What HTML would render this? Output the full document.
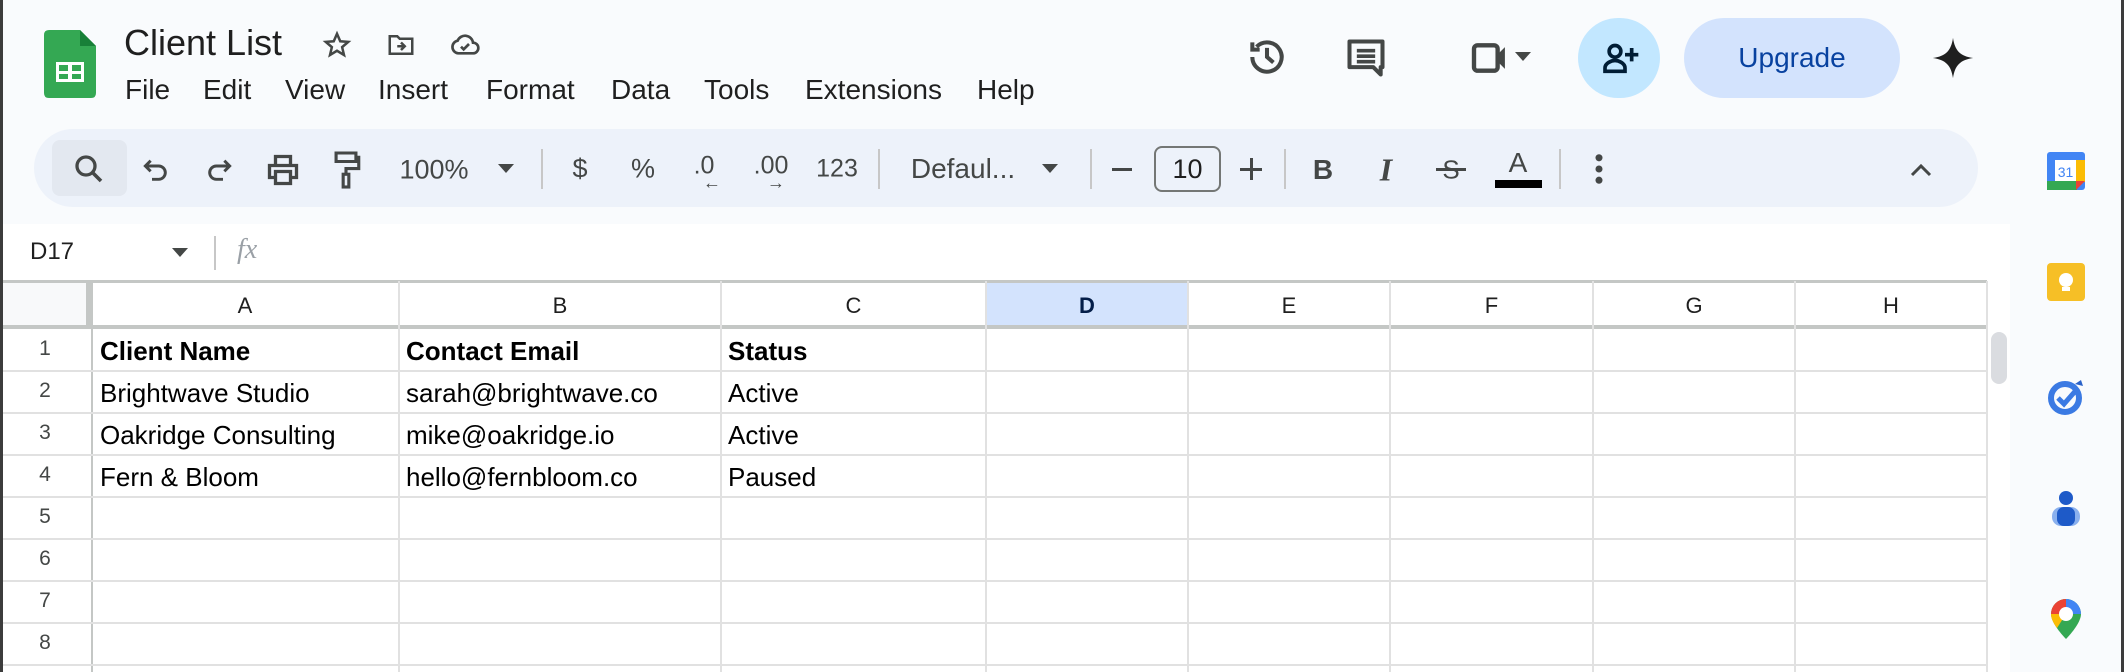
<!DOCTYPE html>
<html><head><meta charset="utf-8"><style>
*{box-sizing:border-box;margin:0;padding:0}
body{width:2124px;height:672px;overflow:hidden;background:#f9fbfd;font-family:"Liberation Sans",sans-serif;color:#1f1f1f;position:relative}
.a{position:absolute}
.menu span{position:absolute;top:74px;font-size:28px;color:#1f1f1f}
.tb{position:absolute;left:34px;top:129px;width:1944px;height:78px;background:#edf2fa;border-radius:39px}
.ic{position:absolute;transform:translate(-50%,-50%)}
.sep{position:absolute;top:149px;width:2px;height:40px;background:#c7c7c7}
.tt{position:absolute;font-size:27px;color:#444746;transform:translate(-50%,-50%)}
.grid{position:absolute;left:0;top:224px;width:2010px;height:448px;background:#fff}
.vl{position:absolute;top:281px;width:2px;height:391px;background:#e1e1e1}
.hl{position:absolute;left:0;width:1987px;height:2px;background:#e1e1e1}
.ch{position:absolute;top:283px;height:46px;line-height:46px;text-align:center;font-size:22px;color:#1f1f1f}
.rn{position:absolute;left:0;width:90px;text-align:center;font-size:21px;color:#444746}
.c{position:absolute;font-size:26px;color:#000}
</style></head><body>
<!-- logo -->
<svg class="a" style="left:44px;top:30px" width="52" height="68" viewBox="0 0 52 68"><path d="M5 0H36L52 16V63Q52 68 47 68H5Q0 68 0 63V5Q0 0 5 0Z" fill="#34a853"/><path d="M36 0V16H52Z" fill="#188038"/><rect x="12" y="32" width="28" height="20" fill="#fff"/><rect x="15" y="35" width="9" height="6" fill="#34a853"/><rect x="28" y="35" width="9" height="6" fill="#34a853"/><rect x="15" y="44" width="9" height="5" fill="#34a853"/><rect x="28" y="44" width="9" height="5" fill="#34a853"/></svg>
<div class="a" style="left:124px;top:22px;font-size:36px;color:#1f1f1f">Client List</div>
<svg class="a" style="left:322px;top:30px" width="30" height="30" viewBox="0 0 24 24"><path d="M12 3l2.6 6 6.4.5-4.9 4.2 1.5 6.3L12 16.6 6.4 20l1.5-6.3L3 9.5 9.4 9z" fill="none" stroke="#444746" stroke-width="2"/></svg>
<svg class="a" style="left:385px;top:30px" width="32" height="30" viewBox="0 0 24 24"><path d="M3 5h6l2 2h10v12H3z" fill="none" stroke="#444746" stroke-width="2"/><path d="M9 13h6M12 10l3 3-3 3" fill="none" stroke="#444746" stroke-width="2"/></svg>
<svg class="a" style="left:448px;top:28px" width="34" height="32" viewBox="0 0 24 24"><path d="M7 19h11a4 4 0 0 0 0-8 6 6 0 0 0-11.5-1.5A4.8 4.8 0 0 0 7 19z" fill="none" stroke="#444746" stroke-width="2"/><path d="M9 14l2 2 4-4" fill="none" stroke="#444746" stroke-width="2"/></svg>
<div class="menu"><span style="left:125px">File</span><span style="left:203px">Edit</span><span style="left:285px">View</span><span style="left:378px">Insert</span><span style="left:486px">Format</span><span style="left:611px">Data</span><span style="left:704px">Tools</span><span style="left:805px">Extensions</span><span style="left:977px">Help</span></div>
<!-- right header -->
<svg class="ic" style="left:1267px;top:57px" width="44" height="44" viewBox="0 0 24 24"><path d="M4 12a8 8 0 1 0 2.3-5.6M4 4v4h4M12 7v5l3.5 3" fill="none" stroke="#444746" stroke-width="2.2"/></svg>
<svg class="ic" style="left:1366px;top:58px" width="44" height="44" viewBox="0 0 24 24"><path d="M3 3h18v14h-1v4l-4-4H3z" fill="none" stroke="#444746" stroke-width="2.2" stroke-linejoin="round"/><path d="M7 8h10M7 11h10M7 14h10" stroke="#444746" stroke-width="2"/></svg>
<svg class="ic" style="left:1494px;top:58px" width="48" height="40" viewBox="0 0 26 22"><rect x="2" y="4" width="13" height="14" rx="2" fill="none" stroke="#444746" stroke-width="2.4"/><path d="M15 9l4-4v12l-4-4z" fill="#444746"/></svg>
<div class="a" style="left:1515px;top:52px;border-left:8px solid transparent;border-right:8px solid transparent;border-top:9px solid #444746"></div>
<div class="a" style="left:1578px;top:18px;width:82px;height:80px;border-radius:41px;background:#c2e7ff"></div>
<svg class="ic" style="left:1620px;top:58px" width="40" height="40" viewBox="0 0 24 24"><circle cx="9" cy="8" r="3.5" fill="none" stroke="#001d35" stroke-width="2.2"/><path d="M3 20v-2c0-3 4-4.5 6-4.5s6 1.5 6 4.5v2z" fill="none" stroke="#001d35" stroke-width="2.2"/><path d="M19 6v8M15 10h8" stroke="#001d35" stroke-width="2.2"/></svg>
<div class="a" style="left:1684px;top:18px;width:216px;height:80px;border-radius:40px;background:#d3e3fd;color:#0842a0;font-size:28px;text-align:center;line-height:80px">Upgrade</div>
<svg class="ic" style="left:1953px;top:58px" width="44" height="44" viewBox="0 0 24 24"><path d="M12 1C13 8 16 11 23 12 16 13 13 16 12 23 11 16 8 13 1 12 8 11 11 8 12 1z" fill="#1f1f1f"/></svg>
<!-- toolbar -->
<div class="tb"></div>
<div class="a" style="left:52px;top:140px;width:75px;height:56px;border-radius:8px;background:#e3e8f0"></div>
<svg class="ic" style="left:89px;top:169px" width="36" height="36" viewBox="0 0 24 24"><circle cx="10" cy="10" r="6" fill="none" stroke="#444746" stroke-width="2.2"/><path d="M14.5 14.5L20 20" stroke="#444746" stroke-width="2.4"/></svg>
<svg class="ic" style="left:156px;top:170px" width="32" height="32" viewBox="0 0 24 24"><path d="M8 5L4 9l4 4M4 9h10a5 5 0 0 1 0 10h-5" fill="none" stroke="#444746" stroke-width="2.2"/></svg>
<svg class="ic" style="left:219px;top:170px" width="32" height="32" viewBox="0 0 24 24"><path d="M16 5l4 4-4 4M20 9H10a5 5 0 0 0 0 10h5" fill="none" stroke="#444746" stroke-width="2.2"/></svg>
<svg class="ic" style="left:283px;top:170px" width="36" height="36" viewBox="0 0 24 24"><path d="M7 8V3h10v5M7 17H3V9h18v8h-4M7 13h10v8H7z" fill="none" stroke="#444746" stroke-width="2.2"/></svg>
<svg class="ic" style="left:346px;top:170px" width="34" height="40" viewBox="0 0 24 28"><path d="M5 2h14v6H5zM19 5h2v8h-9v4" fill="none" stroke="#444746" stroke-width="2.2"/><rect x="10" y="17" width="4" height="9" fill="none" stroke="#444746" stroke-width="2.2"/></svg>
<div class="tt" style="left:434px;top:170px">100%</div>
<div class="a" style="left:498px;top:164px;border-left:8px solid transparent;border-right:8px solid transparent;border-top:9px solid #444746"></div>
<div class="sep" style="left:541px"></div>
<div class="tt" style="left:580px;top:169px">$</div>
<div class="tt" style="left:643px;top:169px">%</div>
<div class="tt" style="left:704px;top:166px;font-size:25px">.0</div>
<div class="tt" style="left:712px;top:183px;font-size:18px">←</div>
<div class="tt" style="left:771px;top:166px;font-size:25px">.00</div>
<div class="tt" style="left:776px;top:183px;font-size:18px">→</div>
<div class="tt" style="left:837px;top:169px;font-size:25px">123</div>
<div class="sep" style="left:878px"></div>
<div class="tt" style="left:963px;top:169px;font-size:28px">Defaul...</div>
<div class="a" style="left:1042px;top:164px;border-left:8px solid transparent;border-right:8px solid transparent;border-top:9px solid #444746"></div>
<div class="sep" style="left:1090px"></div>
<div class="a" style="left:1112px;top:168px;width:20px;height:3px;background:#444746"></div>
<div class="a" style="left:1154px;top:146px;width:67px;height:46px;border:2px solid #747775;border-radius:8px;font-size:27px;text-align:center;line-height:42px;color:#1f1f1f">10</div>
<div class="a" style="left:1240px;top:168px;width:22px;height:3px;background:#444746"></div>
<div class="a" style="left:1250px;top:158px;width:3px;height:22px;background:#444746"></div>
<div class="sep" style="left:1284px"></div>
<div class="tt" style="left:1323px;top:170px;font-weight:bold;font-size:28px">B</div>
<div class="tt" style="left:1386px;top:170px;font-style:italic;font-family:'Liberation Serif',serif;font-size:32px;font-weight:bold">I</div>
<div class="tt" style="left:1451px;top:170px;font-size:26px">S</div>
<div class="a" style="left:1436px;top:168px;width:30px;height:3px;background:#444746"></div>
<div class="tt" style="left:1518px;top:163px;font-size:28px">A</div>
<div class="a" style="left:1495px;top:180px;width:47px;height:8px;background:#000"></div>
<div class="sep" style="left:1559px"></div>
<svg class="ic" style="left:1599px;top:169px" width="10" height="32" viewBox="0 0 6 20"><circle cx="3" cy="3" r="2.2" fill="#444746"/><circle cx="3" cy="10" r="2.2" fill="#444746"/><circle cx="3" cy="17" r="2.2" fill="#444746"/></svg>
<svg class="ic" style="left:1921px;top:170px" width="26" height="18" viewBox="0 0 26 18"><path d="M4 14l9-9 9 9" fill="none" stroke="#444746" stroke-width="3"/></svg>
<!-- grid area -->
<div class="grid"></div>
<div class="a" style="left:30px;top:238px;font-size:24px;color:#1f1f1f">D17</div>
<div class="a" style="left:172px;top:248px;border-left:8px solid transparent;border-right:8px solid transparent;border-top:9px solid #444746"></div>
<div class="a" style="left:214px;top:236px;width:2px;height:34px;background:#c7c7c7"></div>
<div class="a" style="left:237px;top:234px;font-family:'Liberation Serif',serif;font-style:italic;font-size:28px;color:#9aa0a6">fx</div>
<!-- header row -->
<div class="a" style="left:0;top:281px;width:1987px;height:48px;background:#fff"></div>
<div class="a" style="left:3px;top:281px;width:84px;height:44px;background:#f8f9fa"></div>
<div class="a" style="left:985px;top:281px;width:202px;height:48px;background:#d3e3fd"></div>
<div class="a" style="left:0;top:280px;width:1987px;height:3px;background:#c4c7c5"></div>
<div class="a" style="left:0;top:325px;width:1987px;height:4px;background:#c4c7c5"></div>
<div class="a" style="left:86px;top:281px;width:6px;height:48px;background:#c4c7c5"></div>
<div class="vl" style="left:91px;background:#c4c7c5"></div>
<div class="vl" style="left:398px"></div><div class="vl" style="left:720px"></div><div class="vl" style="left:985px"></div><div class="vl" style="left:1187px"></div><div class="vl" style="left:1389px"></div><div class="vl" style="left:1592px"></div><div class="vl" style="left:1794px"></div><div class="vl" style="left:1986px"></div>
<div class="hl" style="top:370px"></div><div class="hl" style="top:412px"></div><div class="hl" style="top:454px"></div><div class="hl" style="top:496px"></div><div class="hl" style="top:538px"></div><div class="hl" style="top:580px"></div><div class="hl" style="top:622px"></div><div class="hl" style="top:664px"></div>
<div class="ch" style="left:92px;width:306px">A</div>
<div class="ch" style="left:400px;width:320px">B</div>
<div class="ch" style="left:722px;width:263px">C</div>
<div class="ch" style="left:987px;width:200px;font-weight:bold;color:#041e49">D</div>
<div class="ch" style="left:1189px;width:200px">E</div>
<div class="ch" style="left:1391px;width:201px">F</div>
<div class="ch" style="left:1594px;width:200px">G</div>
<div class="ch" style="left:1796px;width:190px">H</div>
<div class="rn" style="top:337px">1</div><div class="rn" style="top:379px">2</div><div class="rn" style="top:421px">3</div><div class="rn" style="top:463px">4</div><div class="rn" style="top:505px">5</div><div class="rn" style="top:547px">6</div><div class="rn" style="top:589px">7</div><div class="rn" style="top:631px">8</div>
<div class="c" style="left:100px;top:336px;font-weight:bold">Client Name</div>
<div class="c" style="left:406px;top:336px;font-weight:bold">Contact Email</div>
<div class="c" style="left:728px;top:336px;font-weight:bold">Status</div>
<div class="c" style="left:100px;top:378px">Brightwave Studio</div>
<div class="c" style="left:406px;top:378px">sarah@brightwave.co</div>
<div class="c" style="left:728px;top:378px">Active</div>
<div class="c" style="left:100px;top:420px">Oakridge Consulting</div>
<div class="c" style="left:406px;top:420px">mike@oakridge.io</div>
<div class="c" style="left:728px;top:420px">Active</div>
<div class="c" style="left:100px;top:462px">Fern &amp; Bloom</div>
<div class="c" style="left:406px;top:462px">hello@fernbloom.co</div>
<div class="c" style="left:728px;top:462px">Paused</div>
<div class="a" style="left:1988px;top:281px;width:22px;height:391px;background:#fff"></div>
<div class="a" style="left:1991px;top:332px;width:16px;height:52px;border-radius:8px;background:#dadce0"></div>
<!-- side panel -->
<div class="a" style="left:2010px;top:0;width:111px;height:672px;background:#f9fbfd"></div>
<svg class="a" style="left:2047px;top:152px" width="38" height="38" viewBox="0 0 38 38"><rect x="0" y="0" width="38" height="38" rx="3" fill="#4285f4"/><rect x="29" y="8" width="9" height="22" fill="#fbbc04"/><rect x="0" y="29" width="30" height="9" fill="#34a853"/><path d="M29 29h9l-9 9z" fill="#ea4335"/><rect x="8" y="8" width="21" height="21" fill="#fff"/><text x="18.5" y="25" font-size="14" text-anchor="middle" fill="#4285f4" font-family="Liberation Sans">31</text></svg>
<svg class="a" style="left:2047px;top:263px" width="38" height="38" viewBox="0 0 38 38"><rect width="38" height="38" rx="4" fill="#f6bf26"/><circle cx="19" cy="17" r="7" fill="#fff"/><rect x="15" y="24" width="8" height="4" fill="#fff"/></svg>
<svg class="a" style="left:2047px;top:378px" width="38" height="38" viewBox="0 0 38 38"><circle cx="18" cy="20" r="14" fill="none" stroke="#3b7ae3" stroke-width="6"/><path d="M11 20l6 6 14-16" fill="none" stroke="#3b7ae3" stroke-width="5"/><path d="M28 6l6-4 2 6z" fill="#2a62c9"/></svg>
<svg class="a" style="left:2049px;top:490px" width="34" height="36" viewBox="0 0 34 36"><circle cx="17" cy="8" r="7" fill="#1e5ac8"/><rect x="3" y="17" width="28" height="19" rx="9" fill="#8ab0ee"/><rect x="8" y="17" width="18" height="19" rx="7" fill="#1e5ac8"/></svg>
<svg class="a" style="left:2051px;top:599px" width="30" height="40" viewBox="0 0 30 40"><path d="M15 0A15 15 0 0 1 30 15C30 25 15 40 15 40S0 25 0 15A15 15 0 0 1 15 0Z" fill="#34a853"/><path d="M15 0A15 15 0 0 1 30 15L15 15Z" fill="#4285f4"/><path d="M15 0A15 15 0 0 0 0 15L15 15Z" fill="#ea4335"/><path d="M0 15C0 20 3 25 6 29L15 15Z" fill="#fbbc04"/><circle cx="15" cy="15" r="7" fill="#fff"/></svg>
<div class="a" style="left:0;top:0;width:3px;height:672px;background:#3c3c3c"></div>
<div class="a" style="right:0;top:0;width:3px;height:672px;background:#3c3c3c"></div>
</body></html>
